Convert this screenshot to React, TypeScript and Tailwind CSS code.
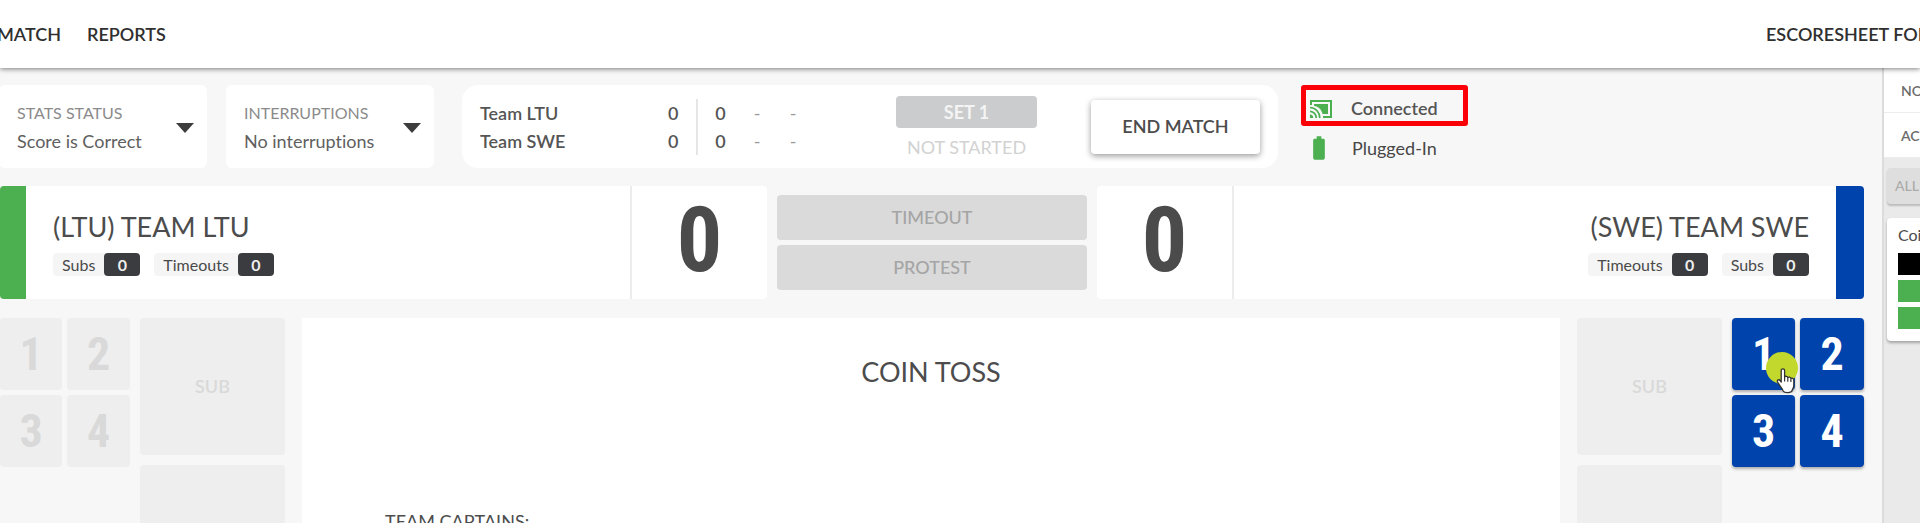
import type { ReactNode } from "react";
import { MdBatteryFull } from "react-icons/md";

const DIGITS = "font-['Liberation_Sans_Narrow','Roboto_Condensed','Liberation_Sans',sans-serif] font-bold";

function Header() {
  return (
    <header className="relative z-10 flex h-[68px] items-center justify-between overflow-hidden bg-white text-[18px] font-semibold text-[#2f2f2f] shadow-[0_1px_5px_rgba(0,0,0,0.5)]">
      <nav className="-ml-[3px] flex gap-[26px]">
        <a href="#match">MATCH</a>
        <a href="#reports">REPORTS</a>
      </nav>
      <a href="#escoresheet" className="w-[154px] whitespace-nowrap">
        ESCORESHEET FORM
      </a>
    </header>
  );
}

function StatusSelect({ id, label, value }: { id: string; label: string; value: string }) {
  return (
    <div className="relative flex h-[83px] w-[208px] flex-col justify-center rounded-md bg-white pl-[18px]">
      <label htmlFor={id} className="text-base leading-7 text-[#8b8b8b]">
        {label}
      </label>
      <select id={id} className="w-full appearance-none bg-transparent text-[18px] leading-7 text-[#606060]">
        <option>{value}</option>
      </select>
      <svg viewBox="0 0 18 10" className="pointer-events-none absolute right-[13px] top-[38px] h-[10px] w-[18px] fill-[#3d3d3d]" aria-hidden="true">
        <path d="M0 0h18L9 10z" />
      </svg>
    </div>
  );
}

function ScoreTable() {
  const rows = ["Team LTU", "Team SWE"];
  return (
    <table className="table-fixed text-[18px] font-semibold leading-7 text-[#555]">
      <tbody>
        {rows.map((team) => (
          <tr key={team}>
            <th scope="row" className="w-[174px] p-0 text-left font-semibold">{team}</th>
            <td className="w-[43px] border-r-2 border-[#e6e6e6] p-0 pl-[14px] text-left">0</td>
            <td className="w-[46px] p-0 text-center">0</td>
            <td className="w-[28px] p-0 text-center font-normal text-[#999]">-</td>
            <td className="w-[44px] p-0 text-center font-normal text-[#999]">-</td>
          </tr>
        ))}
      </tbody>
    </table>
  );
}

function CastIcon() {
  return (
    <svg viewBox="0 0 22 18" className="h-[18px] w-[22px]" fill="none" stroke="#4caf50" aria-hidden="true">
      <path d="M1 5V1h20v16h-8" strokeWidth="2" />
      <path d="M4 4h14v10h-5.500C11.500 9.500 8.500 6.600 4 5.800z" fill="#4caf50" stroke="none" />
      <path d="M0 7.500A10 10 0 0 1 9.700 18M0 11.300A6.400 6.400 0 0 1 6.200 18" strokeWidth="1.700" />
      <path d="M0 14.600A3.300 3.300 0 0 1 3.200 18H0z" fill="#4caf50" stroke="none" />
    </svg>
  );
}

function StatusBar() {
  return (
    <div className="flex h-[83px]">
      <div className="-ml-px flex gap-[19px]">
        <StatusSelect id="stats" label="STATS STATUS" value="Score is Correct" />
        <StatusSelect id="interruptions" label="INTERRUPTIONS" value="No interruptions" />
      </div>
      <section className="ml-7 flex w-[816px] items-center rounded-2xl bg-white pl-[18px]">
        <ScoreTable />
        <div className="ml-auto mr-[54px] flex w-[141px] flex-col items-center pt-1">
          <span className="flex h-8 w-full items-center justify-center rounded bg-[#cbcccd] text-[18px] font-bold text-[#f4f4f4]">SET 1</span>
          <span className="mt-[5px] text-[18px] leading-7 text-[#d2d2d2]">NOT STARTED</span>
        </div>
        <button className="mr-[18px] h-[54px] w-[169px] rounded bg-white text-[18px] font-semibold text-[#4c4c4c] shadow-[0_2px_6px_rgba(0,0,0,0.4)]">
          END MATCH
        </button>
      </section>
      <div className="ml-[23px] flex flex-col text-[18px] text-[#484848]">
        <div className="flex h-[41px] w-[167px] items-center gap-[19px] rounded-[3px] border-[5px] border-[#fb0007] pl-1 pt-[6px] font-semibold text-[#555]">
          <CastIcon />
          Connected
        </div>
        <div className="mt-1 flex h-9 items-center gap-[19px] pl-1">
          <MdBatteryFull className="size-7 text-[#4caf50]" />
          Plugged-In
        </div>
      </div>
    </div>
  );
}

function Counter({ label }: { label: string }) {
  return (
    <span className="flex h-[23px] items-center rounded bg-[#f5f5f6] pl-[9px] text-base text-[#4a4a4a]">
      {label}
      <span className="ml-[9px] flex h-full w-9 items-center justify-center rounded bg-[#3b3c40] font-bold text-[#eee]">0</span>
    </span>
  );
}

function BigScore({ className }: { className: string }) {
  return (
    <div className={`flex w-[137px] items-center justify-center bg-white text-[90px] leading-none text-[#4b4b4b] ${DIGITS} ${className}`}>
      <span className="pb-1">0</span>
    </div>
  );
}

function Scoreboard() {
  return (
    <div className="mt-[18px] flex h-[113px]">
      <section className="flex flex-1">
        <div className="w-[26px] rounded-l bg-[#4caf50]" />
        <div className="flex-1 bg-white pl-[27px] pt-[23px]">
          <h2 className="text-[27px] leading-9 text-[#4c4c4c]">(LTU) TEAM LTU</h2>
          <div className="mt-2 flex gap-[14px]">
            <Counter label="Subs" />
            <Counter label="Timeouts" />
          </div>
        </div>
        <BigScore className="rounded-r border-l-2 border-[#ececec]" />
      </section>
      <div className="mx-[10px] flex w-[310px] flex-col justify-center gap-[5px] text-[18px] text-[#a5a5a5]">
        <button className="h-[45px] rounded bg-[#dadada] font-medium">TIMEOUT</button>
        <button className="h-[45px] rounded bg-[#dadada] font-medium">PROTEST</button>
      </div>
      <section className="flex flex-1">
        <BigScore className="rounded-l border-r-2 border-[#ececec]" />
        <div className="flex flex-1 flex-col items-end bg-white pr-[27px] pt-[23px]">
          <h2 className="text-[27px] leading-9 text-[#4c4c4c]">(SWE) TEAM SWE</h2>
          <div className="mt-2 flex gap-[14px]">
            <Counter label="Timeouts" />
            <Counter label="Subs" />
          </div>
        </div>
        <div className="w-[28px] rounded-r bg-[#0143ad]" />
      </section>
    </div>
  );
}

function Pointer() {
  return (
    <span className="pointer-events-none absolute left-[34px] top-[34px] z-10">
      <span className="block size-8 rounded-full bg-[#c3d82c]" />
      <svg viewBox="0 0 20 27" className="absolute left-[10px] top-4 h-[27px] w-5" aria-hidden="true">
        <path
          d="M5.2 2.6c0-2.2 3.4-2.2 3.4 0v6.3c.6-1 3-.8 3.2.7.8-.9 2.9-.5 3.1.9 1-.6 2.9-.2 2.9 1.7v5.2c0 2.2-1.4 3.4-1.6 5.1-.8 2.6-7.8 2.8-9.2.2-.6-2.6-4.2-5.6-5.5-8.9-.7-2 1.6-2.8 2.7-1.2l1 1.5z"
          fill="#fff"
          stroke="#333"
          strokeWidth="1.3"
          strokeLinejoin="round"
        />
        <path d="M8.6 9v4.5M11.8 9.8v3.9M14.9 10.7v3.2" stroke="#333" strokeWidth="1.2" fill="none" />
      </svg>
    </span>
  );
}

function PlayerGrid({ active, className }: { active?: boolean; className: string }) {
  const tone = active
    ? "rounded bg-[#0143ad] text-white shadow-[0_2px_3px_rgba(0,0,0,0.3)]"
    : "rounded-sm bg-[#eeeeee] text-[#d9d9d9]";
  return (
    <div className={`grid auto-rows-[72px] content-start gap-[5px] ${className}`}>
      {[1, 2, 3, 4].map((n) => (
        <button key={n} className={`relative text-[46px] leading-none ${DIGITS} ${tone} ${active && n === 1 ? "z-10" : ""}`}>
          {n}
          {active && n === 1 && <Pointer />}
        </button>
      ))}
    </div>
  );
}

function SubColumn({ className }: { className: string }) {
  return (
    <div className={`flex w-[145px] flex-col gap-[10px] ${className}`}>
      <button className="h-[137px] rounded-sm bg-[#eeeeee] text-[18px] font-semibold text-[#d9d9d9]">SUB</button>
      <div className="flex-1 rounded-t-sm bg-[#eeeeee]" />
    </div>
  );
}

function Court() {
  return (
    <div className="mt-[19px] flex min-h-0 flex-1">
      <PlayerGrid className="grid-cols-[62px_63px]" />
      <SubColumn className="ml-[10px]" />
      <section className="mx-[17px] flex-1 bg-white">
        <h1 className="pt-9 text-center text-[27px] leading-9 text-[#4c4c4c]">COIN TOSS</h1>
        <h3 className="mt-[119px] pl-[83px] text-[18px] leading-6 text-[#4c4c4c]">TEAM CAPTAINS:</h3>
      </section>
      <SubColumn className="mr-[10px]" />
      <PlayerGrid active className="grid-cols-[63px_64px]" />
    </div>
  );
}

function SideTab({ children }: { children: ReactNode }) {
  return (
    <a href="#log" className="flex h-[45px] items-center whitespace-nowrap border-b border-[#ededed] bg-white pl-[17px] pt-[2px] text-sm font-semibold text-[#6b6b6b]">
      {children}
    </a>
  );
}

function Sidebar() {
  return (
    <aside className="w-[38px] shrink-0 overflow-hidden border-l-2 border-[#dcdcdc] bg-[#eaeaea]">
      <SideTab>NOTES</SideTab>
      <SideTab>ACTIONS</SideTab>
      <button className="ml-[3px] mt-[10px] flex h-9 w-24 items-center rounded bg-[#dedede] pl-2 text-sm font-medium text-[#ababab] shadow-[0_2px_2px_rgba(0,0,0,0.2)]">
        ALL
      </button>
      <div className="ml-[3px] mt-[14px] h-[123px] w-48 rounded bg-white pl-[11px] pt-[7px] shadow-[0_2px_3px_rgba(0,0,0,0.3)]">
        <p className="text-base leading-5 text-[#4c4c4c]">Coin toss</p>
        <div className="mt-2 flex flex-col gap-[5px]">
          <span className="h-[22px] bg-black" />
          <span className="h-[22px] bg-[#4caf50]" />
          <span className="h-[22px] bg-[#4caf50]" />
        </div>
      </div>
    </aside>
  );
}

export default function App() {
  return (
    <div className="flex h-screen flex-col overflow-hidden bg-[#f7f7f7] font-['Lato',sans-serif] [font-variant-ligatures:none]">
      <Header />
      <div className="flex min-h-0 flex-1">
        <main className="flex min-w-0 flex-1 flex-col overflow-hidden pr-[18px] pt-[17px]">
          <StatusBar />
          <Scoreboard />
          <Court />
        </main>
        <Sidebar />
      </div>
    </div>
  );
}
